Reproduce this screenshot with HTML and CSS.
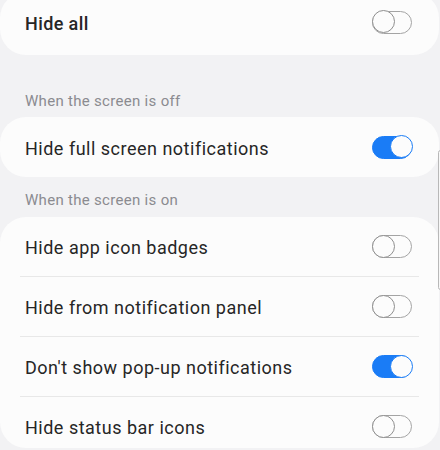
FILE: index.html
```html
<!DOCTYPE html>
<html lang="en">
<head>
    <meta charset="UTF-8">
    <meta name="viewport" content="width=device-width, initial-scale=1.0">
    <title>Notifications</title>
    <link rel="stylesheet" href="styles.css">
</head>
<body>

<div class="pantalla">
    <div class="tarjeta primera">
        <div class="fila">
            <span class="texto fuerte">Hide all</span>
            <span class="switch"><span class="bola"></span></span>
        </div>
    </div>

    <div class="titulo">When the screen is off</div>
    <div class="tarjeta">
        <div class="fila">
            <span class="texto">Hide full screen notifications</span>
            <span class="switch on"><span class="bola"></span></span>
        </div>
    </div>

    <div class="titulo cerca">When the screen is on</div>
    <div class="tarjeta cortada">
        <div class="fila">
            <span class="texto">Hide app icon badges</span>
            <span class="switch"><span class="bola"></span></span>
        </div>
        <div class="divisor"></div>
        <div class="fila">
            <span class="texto">Hide from notification panel</span>
            <span class="switch"><span class="bola"></span></span>
        </div>
        <div class="divisor"></div>
        <div class="fila">
            <span class="texto">Don't show pop-up notifications</span>
            <span class="switch on"><span class="bola"></span></span>
        </div>
        <div class="divisor"></div>
        <div class="fila">
            <span class="texto">Hide status bar icons</span>
            <span class="switch"><span class="bola"></span></span>
        </div>
    </div>

    <div class="scroll"></div>
</div>

</body>
</html>
```

FILE: styles.css
```css
body {
    font-family: Roboto, "Noto Sans", sans-serif;
    margin: 0;
    padding: 0;
    background-color: #f2f2f4;
    overflow: hidden;
}
.pantalla {
    position: relative;
    width: 440px;
    height: 450px;
    overflow: hidden;
}
.tarjeta {
    background-color: #fcfcfc;
    border-radius: 26px;
    margin-right: 1px;
}
.primera {
    margin-top: -8px;
    padding-bottom: 3px;
}
.cortada {
    height: 231px;
    overflow: hidden;
}
.fila {
    display: flex;
    align-items: center;
    justify-content: space-between;
    height: 59px;
    padding: 0 27px 0 25px;
}
.primera .fila,
.tarjeta:not(.cortada) .fila {
    height: 60px;
}
.texto {
    font-size: 18px;
    letter-spacing: 0.5px;
    color: #262626;
    padding-top: 2px;
}
.fuerte {
    font-weight: 500;
    letter-spacing: 0.4px;
}
.divisor {
    height: 1px;
    margin: 0 20px;
    background-color: #e8e8e8;
}
.titulo {
    font-size: 15px;
    letter-spacing: 0.3px;
    line-height: 20px;
    color: #8b8b90;
    padding: 36px 25px 6px;
}
.titulo.cerca {
    padding-top: 13px;
    padding-bottom: 7px;
}
.switch {
    display: flex;
    justify-content: flex-start;
    width: 40px;
    height: 23px;
    box-sizing: border-box;
    border: 1.5px solid #a4a4a4;
    border-radius: 12px;
}
.bola {
    width: 23px;
    height: 23px;
    box-sizing: border-box;
    margin: -1.5px;
    border: 1.5px solid #8e8e8e;
    border-radius: 50%;
    background-color: #fcfcfc;
}
.switch.on {
    justify-content: flex-end;
    background-color: #1a7cf6;
    border-color: #1a7cf6;
}
.switch.on .bola {
    border-color: #1a7cf6;
}
.scroll {
    position: absolute;
    top: 150px;
    right: -3px;
    width: 5px;
    height: 140px;
    box-sizing: border-box;
    border: 1px solid #b8b8b8;
    border-radius: 3px;
    background-color: #f7f7f7;
}
```
